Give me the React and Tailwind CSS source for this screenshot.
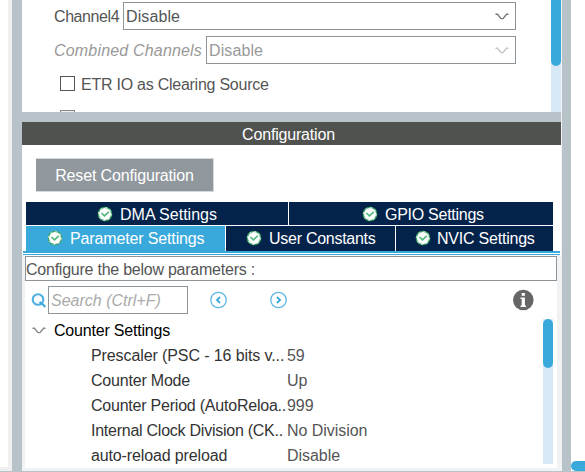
import React from "react";

const CheckBadge = ({ className = "" }) => (
  <svg width="16" height="16" viewBox="0 0 16 16" className={"shrink-0 " + className}>
    <circle cx="8" cy="8" r="7.3" fill="#3fa368" />
    <circle cx="8" cy="8" r="6" fill="#fff" />
    <circle cx="8" cy="8" r="6.6" fill="none" stroke="#d5efde" strokeWidth="0.9" strokeDasharray="1.6 3.6" />
    <path d="M4.4 7 L7.4 9.8 L11.8 5.8" fill="none" stroke="#4fb97c" strokeWidth="1.6" />
  </svg>
);

const Chevron = ({ color, className = "" }) => (
  <svg width="14" height="8" viewBox="0 0 14 8" className={"shrink-0 " + className}>
    <path d="M0.5 1.2 H2.5 L6 5.6 H8 L11.5 1.2 H13.5" fill="none" stroke={color} strokeWidth="1.4" />
  </svg>
);

const CircleArrow = ({ flip }) => (
  <svg width="18" height="18" viewBox="0 0 18 18" className="shrink-0">
    <circle cx="8.5" cy="9" r="7.7" fill="none" stroke="#5fb8e2" strokeWidth="1.3" />
    <path d={flip ? "M7 6 L10 9 L7 12" : "M10 6 L7 9 L10 12"} fill="none" stroke="#39a9dc" strokeWidth="1.8" />
  </svg>
);

const rows = [
  ["Prescaler (PSC - 16 bits v...", "59", "tracking-[-0.1px]"],
  ["Counter Mode", "Up", "tracking-[-0.2px]"],
  ["Counter Period (AutoReloa..", "999", "tracking-[-0.22px]"],
  ["Internal Clock Division (CK..", "No Division", "tracking-[-0.25px]"],
  ["auto-reload preload", "Disable", "tracking-[-0.13px]"],
];

function ModePane() {
  return (
    <div className="flex h-[112px] overflow-hidden bg-white text-[#555]">
      <div className="w-[529px] shrink-0 pt-[2px]">
        <div className="flex h-7 items-center pl-8">
          <span className="w-[69px] pt-[2px] tracking-[-0.42px]">Channel4</span>
          <div className="flex h-7 w-[393px] items-center justify-between border border-[#8d959b] pl-[2px] pr-[6px]">
            <span className="pt-[2px] tracking-[0.1px]">Disable</span>
            <Chevron color="#777" className="mt-[2px]" />
          </div>
        </div>
        <div className="mt-[6px] flex h-7 items-center pl-8 text-[#999]">
          <span className="w-[152px] pt-[2px] italic tracking-[0.18px]">Combined Channels</span>
          <div className="flex h-7 w-[310px] items-center justify-between border border-[#8d959b] pl-[2px] pr-[6px]">
            <span className="pt-[2px] tracking-[0.1px]">Disable</span>
            <Chevron color="#c4c4c4" className="mt-[2px]" />
          </div>
        </div>
        <div className="mt-3 flex h-[15px] items-center pl-[38px]">
          <div className="h-[15px] w-[15px] border border-[#555]" />
          <span className="ml-[6px] pt-[2px] tracking-[-0.25px]">ETR IO as Clearing Source</span>
        </div>
        <div className="ml-[38px] mt-[19px] h-[15px] w-[15px] border border-[#888] bg-[#eee]" />
      </div>
      <div className="h-full w-[10px] bg-[#d8e8f5]">
        <div className="h-[66px] rounded-b-full bg-[#39a9dc]" />
      </div>
    </div>
  );
}

function Tabs() {
  return (
    <div className="ml-1 w-[527px] text-white">
      <div className="flex h-[23px] gap-px">
        <div className="flex w-[262px] items-center bg-[#03234b] pl-[71px]">
          <CheckBadge />
          <span className="ml-[7px] pt-[2px]">DMA Settings</span>
        </div>
        <div className="flex w-[264px] items-center bg-[#03234b] pl-[73px]">
          <CheckBadge />
          <span className="ml-[7px] pt-[2px] tracking-[-0.27px]">GPIO Settings</span>
        </div>
      </div>
      <div className="mt-px flex h-[25px] gap-px">
        <div className="flex w-[199px] items-center bg-[#39a9dc] pl-[21px]">
          <CheckBadge className="-mt-px" />
          <span className="ml-[7px] tracking-[-0.14px]">Parameter Settings</span>
        </div>
        <div className="flex w-[169px] items-center bg-[#03234b] pl-[20px]">
          <CheckBadge className="-mt-px" />
          <span className="ml-[7px] tracking-[-0.27px]">User Constants</span>
        </div>
        <div className="flex w-[157px] items-center bg-[#03234b] pl-[19px]">
          <CheckBadge className="-mt-px" />
          <span className="ml-[6px] tracking-[-0.22px]">NVIC Settings</span>
        </div>
      </div>
    </div>
  );
}

function Parameters() {
  return (
    <div className="flex h-[216px] w-[540px] flex-col bg-[#f0f2f4] pb-1 pl-[3px] pr-[5px]">
      <div className="h-px shrink-0 bg-white" />
      <div className="flex h-[25px] shrink-0 items-center border border-[#8d959b] bg-white pt-[2px] tracking-[-0.24px] text-[#555]">
        Configure the below parameters :
      </div>
      <div className="flex flex-1 flex-col bg-white">
        <div className="mt-[5px] flex h-7 items-center pl-[6px]">
          <svg width="16" height="16" viewBox="0 0 16 16" className="shrink-0">
            <circle cx="7" cy="7.5" r="5.3" fill="none" stroke="#4db0e0" strokeWidth="2.1" />
            <path d="M8.8 9.8 L10.5 12.5 M10.5 11 L14.3 15" stroke="#39a9dc" strokeWidth="2" />
          </svg>
          <div className="ml-px flex h-7 w-[140px] items-center border border-[#8d959b] pl-[2px] pt-px italic text-[#aaa]">
            Search (Ctrl+F)
          </div>
          <div className="ml-[22px] flex gap-[42px]">
            <CircleArrow />
            <CircleArrow flip />
          </div>
          <svg width="22" height="22" viewBox="0 0 22 22" className="ml-[224px] shrink-0">
            <circle cx="11.3" cy="11" r="10.3" fill="#666" />
            <rect x="9.7" y="4" width="3.2" height="2.8" fill="#fff" />
            <path d="M8.5 8.6 H12.9 V16.6 H14 V18 H8.5 V16.6 H9.7 V10 H8.5 Z" fill="#fff" />
          </svg>
        </div>
        <div className="flex">
          <div className="w-[518px] pt-1">
            <div className="flex h-[25px] items-center pl-[7px] text-black">
              <Chevron color="#888" />
              <span className="ml-2 pt-px tracking-[-0.2px]">Counter Settings</span>
            </div>
            {rows.map(([name, value, tracking]) => (
              <div key={name} className="flex h-[25px] items-center pl-[66px] pt-px text-[#333]">
                <span className={"w-[196px] shrink-0 whitespace-nowrap " + tracking}>{name}</span>
                <span className="tracking-[-0.05px] text-[#555]">{value}</span>
              </div>
            ))}
          </div>
          <div className="mt-[5px] h-[145px] w-[10px] bg-[#d8e8f5]">
            <div className="h-[49px] rounded-full bg-[#39a9dc]" />
          </div>
        </div>
      </div>
    </div>
  );
}

export default function App() {
  return (
    <div className="flex h-[472px] w-[585px] overflow-hidden whitespace-nowrap bg-[#b8c2c9] font-['Liberation_Sans',Arial,sans-serif] text-[16px] leading-[18px]">
      <div className="flex h-[471px] w-3 shrink-0 bg-[#f0f0f0] pb-1">
        <div className="w-2 bg-white" />
      </div>
      <div className="ml-[10px] w-[540px] shrink-0">
        <div className="flex h-[471px] flex-col border-r border-[#f0f2f4] bg-white">
          <ModePane />
          <div className="h-[10px] shrink-0 bg-[#b8c2c9]" />
          <div className="flex h-[23px] shrink-0 items-center justify-center bg-[#50524f] pr-[6px] pt-[2px] tracking-[-0.18px] text-white">
            Configuration
          </div>
          <div className="h-[57px] shrink-0 pl-[14px] pt-[13px]">
            <div className="flex h-[34px] w-[178px] items-center justify-center border-y border-r border-[#d5d9dc] bg-[#90979d] pt-px tracking-[-0.15px] text-white">
              Reset Configuration
            </div>
          </div>
          <Tabs />
          <div className="ml-px h-1 w-[537px] shrink-0 border-b border-t-2 border-[#39a9dc]" />
          <Parameters />
        </div>
      </div>
      <div className="ml-[9px] flex h-[471px] flex-1 flex-col justify-end bg-white">
        <div className="h-[10px] rounded-l-full bg-[#39a9dc]" />
      </div>
    </div>
  );
}
